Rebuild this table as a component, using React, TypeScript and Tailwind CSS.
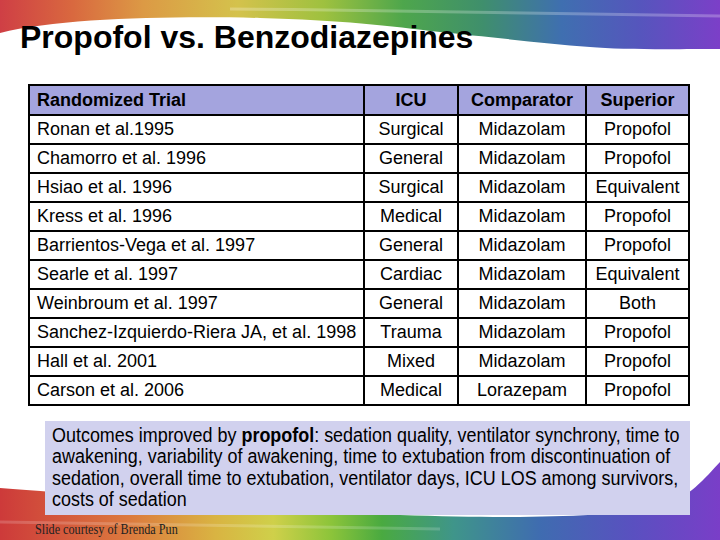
const rows = [
  ["Ronan et al.1995", "Surgical", "Midazolam", "Propofol"],
  ["Chamorro et al. 1996", "General", "Midazolam", "Propofol"],
  ["Hsiao et al. 1996", "Surgical", "Midazolam", "Equivalent"],
  ["Kress et al. 1996", "Medical", "Midazolam", "Propofol"],
  ["Barrientos-Vega et al. 1997", "General", "Midazolam", "Propofol"],
  ["Searle et al. 1997", "Cardiac", "Midazolam", "Equivalent"],
  ["Weinbroum et al. 1997", "General", "Midazolam", "Both"],
  ["Sanchez-Izquierdo-Riera JA, et al. 1998", "Trauma", "Midazolam", "Propofol"],
  ["Hall et al. 2001", "Mixed", "Midazolam", "Propofol"],
  ["Carson et al. 2006", "Medical", "Lorazepam", "Propofol"],
];

function Rainbow() {
  return (
    <svg className="absolute inset-0" width="720" height="540" viewBox="0 0 720 540">
      <defs>
        <linearGradient id="topBand" x1="0" y1="0" x2="720" y2="0" gradientUnits="userSpaceOnUse">
          <stop offset="0" stopColor="#cf3f45" />
          <stop offset="0.1" stopColor="#d9683f" />
          <stop offset="0.2" stopColor="#dc9a45" />
          <stop offset="0.33" stopColor="#d4c24c" />
          <stop offset="0.45" stopColor="#9ec13f" />
          <stop offset="0.56" stopColor="#4ea64c" />
          <stop offset="0.67" stopColor="#3f8f6c" />
          <stop offset="0.78" stopColor="#3f6fb0" />
          <stop offset="0.89" stopColor="#5655bd" />
          <stop offset="1" stopColor="#7c3fc8" />
        </linearGradient>
        <linearGradient id="bottomBand" x1="0" y1="0" x2="720" y2="0" gradientUnits="userSpaceOnUse">
          <stop offset="0" stopColor="#cd3a3a" />
          <stop offset="0.18" stopColor="#dc7a3e" />
          <stop offset="0.3" stopColor="#d9b442" />
          <stop offset="0.38" stopColor="#cfd04a" />
          <stop offset="0.46" stopColor="#8cc43a" />
          <stop offset="0.53" stopColor="#4aaa40" />
          <stop offset="0.63" stopColor="#3f958a" />
          <stop offset="0.75" stopColor="#3f6cb0" />
          <stop offset="0.88" stopColor="#5a50c0" />
          <stop offset="1" stopColor="#7a3ec8" />
        </linearGradient>
      </defs>
      <path
        d="M0 0 H720 V49 C680 49 620 50 590 47 C540 43 480 36 440 32 C390 26 340 20 260 18 C170 16 60 18 0 33 Z"
        fill="url(#topBand)"
      />
      <path d="M230 9 C380 10 520 14 720 16" stroke="#ffffff" strokeOpacity="0.25" strokeWidth="3" fill="none" />
      <path
        d="M0 488 C100 495 250 510 400 515 C520 519 600 517 660 508 C690 497 705 478 720 462 V540 H0 Z"
        fill="url(#bottomBand)"
      />
      <path d="M0 522 C150 524 300 527 440 529" stroke="#ffffff" strokeOpacity="0.18" strokeWidth="3" fill="none" />
    </svg>
  );
}

export default function App() {
  return (
    <div className="relative w-[720px] h-[540px] overflow-hidden bg-white">
      <Rainbow />
      <div className="relative flex flex-col font-['Liberation_Sans',Arial,sans-serif] text-black">
        <h1 className="pl-[20px] pt-[17px] h-[57px] text-[32px] leading-[40px] font-bold">
          Propofol vs. Benzodiazepines
        </h1>

        <table className="ml-[28px] mt-[27px] w-[660px] table-fixed border-collapse border-2 border-black bg-white text-[18px]">
          <colgroup>
            <col className="w-[335px]" />
            <col className="w-[94px]" />
            <col className="w-[128px]" />
            <col className="w-[103px]" />
          </colgroup>
          <thead>
            <tr className="h-[30px] bg-[#a4a4de] font-bold">
              <td className="border-2 border-black pl-[7px] text-left">Randomized Trial</td>
              <td className="border-2 border-black text-center">ICU</td>
              <td className="border-2 border-black text-center">Comparator</td>
              <td className="border-2 border-black text-center">Superior</td>
            </tr>
          </thead>
          <tbody>
            {rows.map((r) => (
              <tr key={r[0]} className="h-[29px]">
                <td className="border-2 border-black pl-[7px] text-left whitespace-nowrap">{r[0]}</td>
                <td className="border-2 border-black text-center">{r[1]}</td>
                <td className="border-2 border-black text-center">{r[2]}</td>
                <td className="border-2 border-black text-center">{r[3]}</td>
              </tr>
            ))}
          </tbody>
        </table>

        <div className="ml-[45px] mt-[15px] w-[645px] h-[94px] bg-[#d1d1ee] pl-[7px] pt-[4px] overflow-hidden">
          <p className="origin-left scale-x-92 text-[19.5px] leading-[21.3px] whitespace-nowrap">
            Outcomes improved by <b>propofol</b>: sedation quality, ventilator synchrony, time to
            <br />
            awakening, variability of awakening, time to extubation from discontinuation of
            <br />
            sedation, overall time to extubation, ventilator days, ICU LOS among survivors,
            <br />
            costs of sedation
          </p>
        </div>

        <p className="ml-[35px] mt-[7px] origin-left scale-x-87 font-['Liberation_Serif',serif] text-[14px] leading-[16px] text-[#222]">
          Slide courtesy of Brenda Pun
        </p>
      </div>
    </div>
  );
}
